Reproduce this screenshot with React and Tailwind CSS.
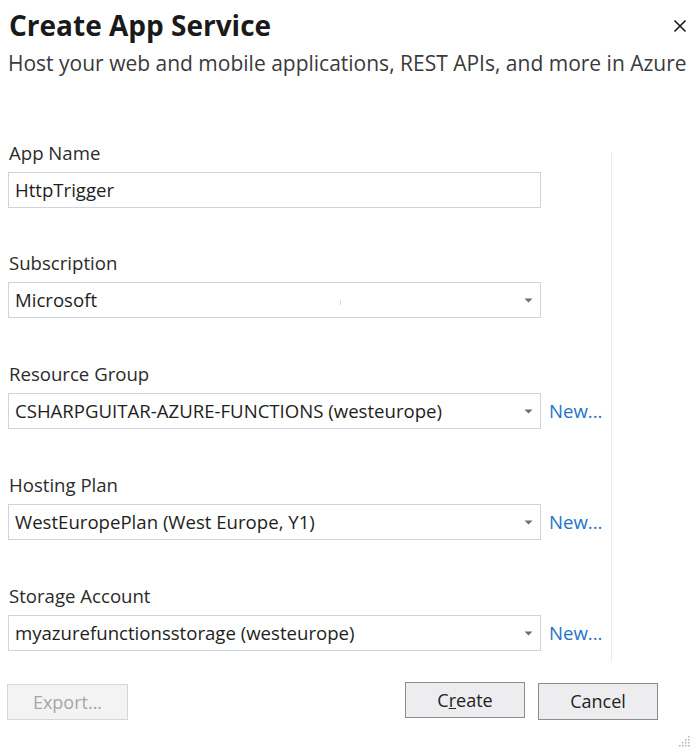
import React from "react";

const font = { fontFamily: '"Open Sans", "Noto Sans", sans-serif' };

function Arrow() {
  return (
    <svg width="9" height="5" viewBox="0 0 9 5" className="shrink-0">
      <path d="M0.5 0.5 L8.5 0.5 L4.5 4.5 Z" fill="#6f6f6f" />
    </svg>
  );
}

function Field({ label, value, select, link, extra, className }) {
  return (
    <div className={"flex flex-col " + (className || "")}>
      <div className="h-[24px] leading-[24px] text-[18.6px] text-[#2b2b2b] pl-[1px] whitespace-nowrap">{label}</div>
      <div className="mt-[7px] flex items-center gap-[8px]">
        <div className="relative w-[533px] h-[36px] border border-[#cfd2df] bg-white flex items-center pl-[6px] pr-[7px]">
          <span className="flex-1 text-[18.6px] text-[#1e1e1e] whitespace-nowrap">{value}</span>
          {extra}
          {select && <Arrow />}
        </div>
        {link && <span className="text-[18.6px] text-[#1f74c8] whitespace-nowrap">New...</span>}
      </div>
    </div>
  );
}

export default function App() {
  return (
    <div style={font} className="w-[697px] h-[752px] bg-white relative overflow-hidden">
      <div className="pl-[9px] pt-[8px] flex items-start justify-between pr-[10px]">
        <h1 className="text-[28px] font-bold leading-[34px] text-[#1a1a1a] whitespace-nowrap">Create App Service</h1>
        <svg width="14" height="14" viewBox="0 0 14 14" className="mt-[11px]">
          <path d="M1.5 1.5 L12.5 12.5 M12.5 1.5 L1.5 12.5" stroke="#1a1a1a" strokeWidth="1.6" />
        </svg>
      </div>
      <div className="pl-[8px] mt-[8px] text-[21px] leading-[26px] text-[#3a3a3a] whitespace-nowrap">
        Host your web and mobile applications, REST APIs, and more in Azure
      </div>

      <div className="flex mt-[65px] pl-[8px] h-[521px]">
        <div className="w-[603px] flex flex-col">
          <Field label="App Name" value="HttpTrigger" />
          <Field
            className="mt-[43px]"
            label="Subscription"
            value="Microsoft"
            select
            extra={<span className="absolute left-[331px] top-[17px] w-[1px] h-[5px] bg-[#d8d8d8]" />}
          />
          <Field className="mt-[44px]" label="Resource Group" value="CSHARPGUITAR-AZURE-FUNCTIONS (westeurope)" select link />
          <Field className="mt-[44px]" label="Hosting Plan" value="WestEuropePlan (West Europe, Y1)" select link />
          <Field className="mt-[44px]" label="Storage Account" value="myazurefunctionsstorage (westeurope)" select link />
        </div>
        <div className="mt-[12px] border-l border-[#ececec]" />
      </div>

      <div className="flex items-start mt-[20px] pl-[7px]">
        <button className="w-[121px] h-[36px] mt-[2px] border border-[#d3d6e0] bg-[#f3f3f3] text-[18px] text-[#a6a6a6]">
          Export...
        </button>
        <button className="ml-[277px] w-[120px] h-[36px] border border-[#8c8c8c] bg-[#ededf0] text-[18px] text-[#222]">
          C<span className="underline">r</span>eate
        </button>
        <button className="ml-[13px] w-[120px] h-[37px] mt-[1px] border border-[#8c8c8c] bg-[#ededf0] text-[18px] text-[#222]">
          Cancel
        </button>
      </div>

      <svg className="absolute right-[7px] bottom-[4px]" width="14" height="14" viewBox="0 0 14 14">
        {[
          [12, 2], [12, 5], [9, 5], [12, 8], [9, 8], [6, 8], [12, 11], [9, 11], [6, 11], [3, 11],
        ].map(([x, y], i) => (
          <rect key={i} x={x} y={y} width="1.5" height="1.5" fill="#a9b3c8" />
        ))}
      </svg>
    </div>
  );
}
